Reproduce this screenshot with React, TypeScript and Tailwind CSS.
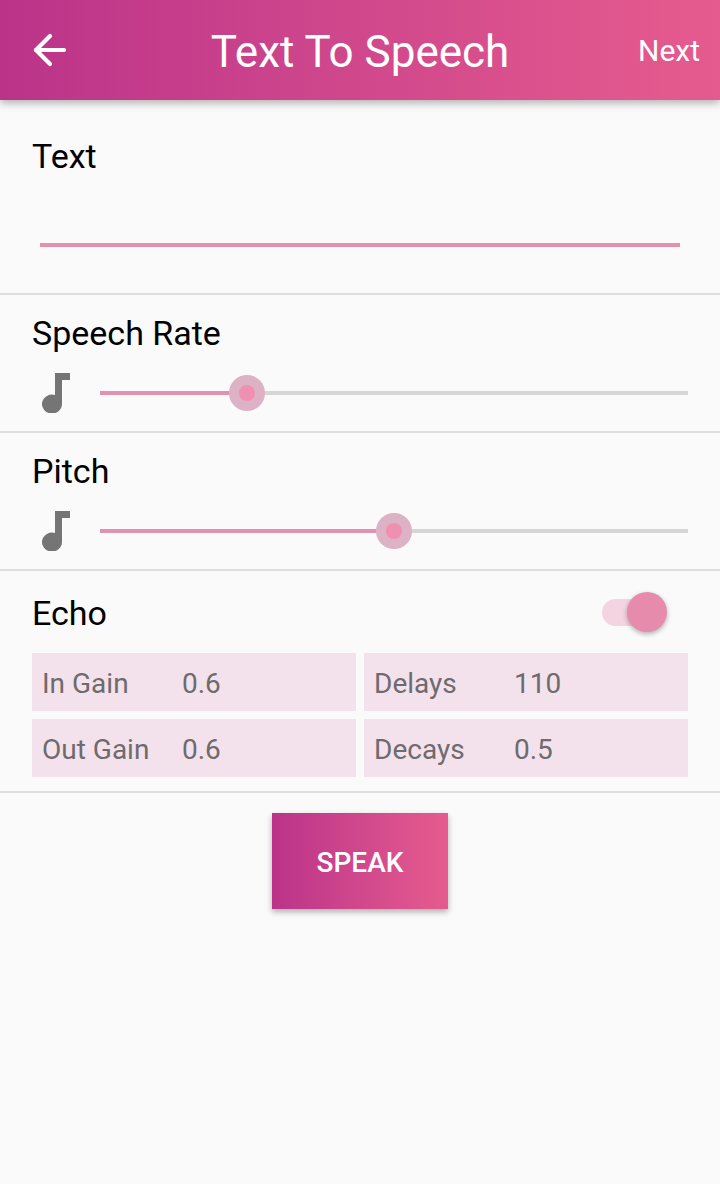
import { ArrowLeft } from "lucide-react"

function NoteIcon() {
  return (
    <svg width="28" height="40" viewBox="0 0 28 40" className="fill-[#757575] shrink-0">
      <path d="M13 0h15v7h-8v24a10 9.5 0 1 1-7-9z" />
    </svg>
  )
}

function SliderRow({ fill, thumb }: { fill: string; thumb: string }) {
  return (
    <div className="flex items-center h-[48px] pl-[42px] pr-[32px] mt-[15px]">
      <NoteIcon />
      <div className="relative flex-1 ml-[30px] h-[4px] bg-[#d6d6d6]">
        <div className={`h-full bg-[#e391b0] ${fill}`} />
        <div className={`absolute top-[-16px] w-[36px] h-[36px] rounded-full bg-[#dcb2c4] flex items-center justify-center ${thumb}`}>
          <div className="w-[16px] h-[16px] rounded-full bg-[#ef8fb1]" />
        </div>
      </div>
    </div>
  )
}

function Field({ label, value }: { label: string; value: string }) {
  return (
    <div className="flex items-center h-[58px] bg-[#f3e2ec] pl-[10px] pt-[4px] text-[28px] text-[#6f6a6e]">
      <span className="w-[140px]">{label}</span>
      <span>{value}</span>
    </div>
  )
}

export default function App() {
  return (
    <div className="flex flex-col w-[720px] h-[1184px] bg-[#fafafa] font-['Roboto',sans-serif] overflow-hidden">
      <header className="relative flex items-center justify-center h-[100px] shrink-0 pt-[4px] bg-gradient-to-r from-[#bb3389] to-[#e65b8e] shadow-[0_3px_8px_rgba(0,0,0,0.3)] text-white">
        <ArrowLeft className="absolute left-[26px] top-[26px]" size={48} strokeWidth={2.1} />
        <h1 className="text-[44px] leading-none">Text To Speech</h1>
        <span className="absolute right-[20px] top-[34px] text-[30px] leading-[34px]">Next</span>
      </header>

      <section className="h-[195px] shrink-0 border-b-2 border-[#dedede] pt-[35px]">
        <div className="pl-[32px] text-[34px] leading-[42px] text-black">Text</div>
        <div className="mx-[40px] mt-[66px] h-[4px] bg-[#e391b0]" />
      </section>

      <section className="h-[138px] shrink-0 border-b-2 border-[#dedede] pt-[17px]">
        <div className="pl-[32px] text-[34px] leading-[42px] text-black">Speech Rate</div>
        <SliderRow fill="w-[147px]" thumb="left-[129px]" />
      </section>

      <section className="h-[138px] shrink-0 border-b-2 border-[#dedede] pt-[17px]">
        <div className="pl-[32px] text-[34px] leading-[42px] text-black">Pitch</div>
        <SliderRow fill="w-[294px]" thumb="left-[276px]" />
      </section>

      <section className="h-[222px] shrink-0 border-b-2 border-[#dedede]">
        <div className="relative h-[82px] pt-[21px] pl-[32px] text-[34px] leading-[42px] text-black">
          Echo
          <div className="absolute left-[602px] top-[28px] w-[56px] h-[27px] rounded-full bg-[#f5d4e2]" />
          <div className="absolute left-[627px] top-[21px] w-[40px] h-[40px] rounded-full bg-[#e78bad] shadow-[0_2px_5px_rgba(0,0,0,0.3)]" />
        </div>
        <div className="grid grid-cols-2 gap-x-[8px] gap-y-[8px] px-[32px]">
          <Field label="In Gain" value="0.6" />
          <Field label="Delays" value="110" />
          <Field label="Out Gain" value="0.6" />
          <Field label="Decays" value="0.5" />
        </div>
      </section>

      <div className="flex justify-center pt-[20px]">
        <button className="w-[176px] h-[96px] pt-[4px] bg-gradient-to-r from-[#bb3389] to-[#e65b8e] text-white text-[28px] font-medium shadow-[0_3px_6px_rgba(0,0,0,0.3)]">
          SPEAK
        </button>
      </div>
    </div>
  )
}
